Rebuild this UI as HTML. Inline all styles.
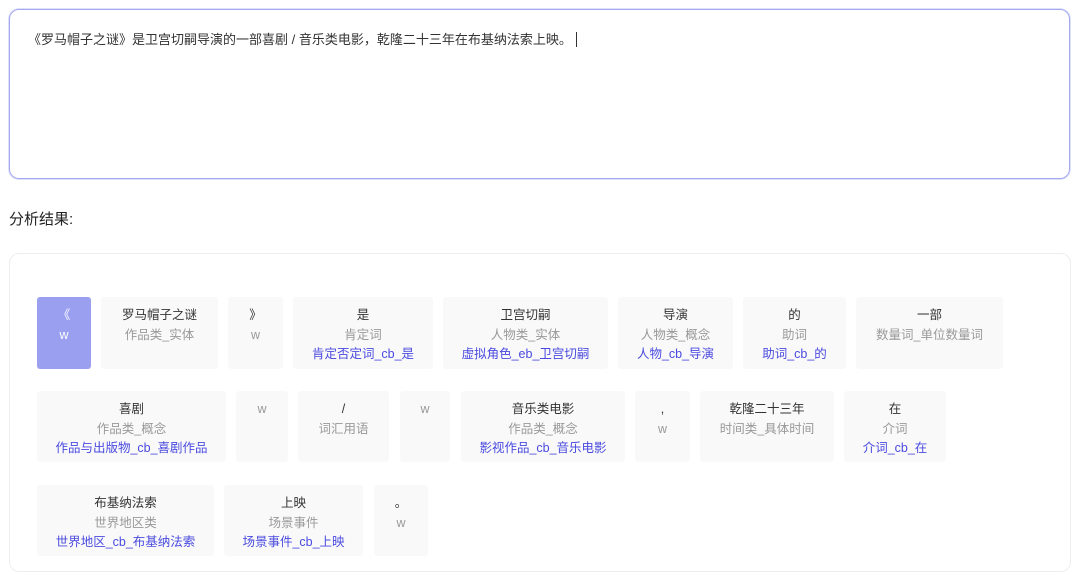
<!DOCTYPE html>
<html><head><meta charset="utf-8"><style>
body{margin:0;width:1080px;height:575px;background:#fff;font-family:"Liberation Sans","Noto Sans CJK SC",sans-serif;position:relative;overflow:hidden}
.ta{position:absolute;left:9px;top:9px;width:1061px;height:170px;border:1px solid #a3a8f0;border-radius:10px;box-shadow:0 0 0 1px #dfe1fb;box-sizing:border-box}
.ta span{position:absolute;left:18px;top:19px;font-size:13px;color:#333}
.cur{display:inline-block;width:1px;height:15px;background:#333;vertical-align:-3px;margin-left:4px}
.lbl{position:absolute;left:9px;top:208px;font-size:15px;color:#222}
.panel{position:absolute;left:9px;top:253px;width:1062px;height:319px;border:1px solid #eee;border-radius:10px;box-sizing:border-box}
.b{position:absolute;background:#f9f9f9;border-radius:3px;text-align:center;font-size:12.5px;line-height:19.5px;padding-top:9px;box-sizing:border-box}
.b .w{color:#333}.b .c{color:#999}.b .l{color:#4a4ae0}
.b.sel{background:#9a9ff0}.b.sel div{color:#fff}
</style></head><body>
<div class="ta"><span>《罗马帽子之谜》是卫宫切嗣导演的一部喜剧 / 音乐类电影，乾隆二十三年在布基纳法索上映。<i class="cur"></i></span></div>
<div class="lbl">分析结果:</div>
<div class="panel"></div>

<div class="b sel" style="left:37px;top:297px;width:54px;height:72px"><div>《</div><div>w</div></div>
<div class="b" style="left:101px;top:297px;width:117px;height:72px"><div class="w">罗马帽子之谜</div><div class="c">作品类_实体</div></div>
<div class="b" style="left:228px;top:297px;width:55px;height:72px"><div class="w">》</div><div class="c">w</div></div>
<div class="b" style="left:293px;top:297px;width:140px;height:72px"><div class="w">是</div><div class="c">肯定词</div><div class="l">肯定否定词_cb_是</div></div>
<div class="b" style="left:443px;top:297px;width:165px;height:72px"><div class="w">卫宫切嗣</div><div class="c">人物类_实体</div><div class="l">虚拟角色_eb_卫宫切嗣</div></div>
<div class="b" style="left:618px;top:297px;width:115px;height:72px"><div class="w">导演</div><div class="c">人物类_概念</div><div class="l">人物_cb_导演</div></div>
<div class="b" style="left:743px;top:297px;width:103px;height:72px"><div class="w">的</div><div class="c">助词</div><div class="l">助词_cb_的</div></div>
<div class="b" style="left:856px;top:297px;width:147px;height:72px"><div class="w">一部</div><div class="c">数量词_单位数量词</div></div>

<div class="b" style="left:37px;top:391px;width:189px;height:71px"><div class="w">喜剧</div><div class="c">作品类_概念</div><div class="l">作品与出版物_cb_喜剧作品</div></div>
<div class="b" style="left:236px;top:391px;width:52px;height:71px"><div class="c">w</div></div>
<div class="b" style="left:298px;top:391px;width:91px;height:71px"><div class="w">/</div><div class="c">词汇用语</div></div>
<div class="b" style="left:400px;top:391px;width:50px;height:71px"><div class="c">w</div></div>
<div class="b" style="left:461px;top:391px;width:164px;height:71px"><div class="w">音乐类电影</div><div class="c">作品类_概念</div><div class="l">影视作品_cb_音乐电影</div></div>
<div class="b" style="left:635px;top:391px;width:55px;height:71px"><div class="w">,</div><div class="c">w</div></div>
<div class="b" style="left:700px;top:391px;width:134px;height:71px"><div class="w">乾隆二十三年</div><div class="c">时间类_具体时间</div></div>
<div class="b" style="left:844px;top:391px;width:102px;height:71px"><div class="w">在</div><div class="c">介词</div><div class="l">介词_cb_在</div></div>

<div class="b" style="left:37px;top:485px;width:177px;height:71px"><div class="w">布基纳法索</div><div class="c">世界地区类</div><div class="l">世界地区_cb_布基纳法索</div></div>
<div class="b" style="left:224px;top:485px;width:139px;height:71px"><div class="w">上映</div><div class="c">场景事件</div><div class="l">场景事件_cb_上映</div></div>
<div class="b" style="left:374px;top:485px;width:54px;height:71px"><div class="w">。</div><div class="c">w</div></div>
</body></html>
